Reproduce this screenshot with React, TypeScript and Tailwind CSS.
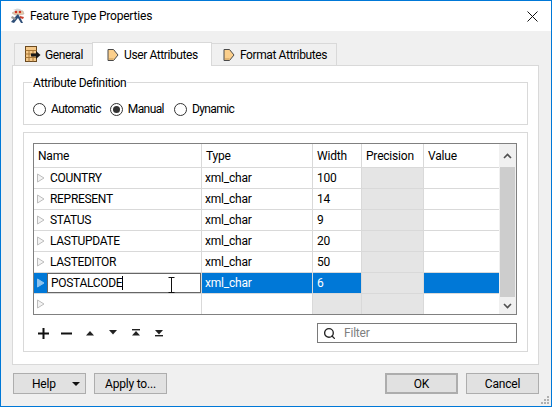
import { Search } from 'lucide-react';

const rows = [
  { name: 'COUNTRY', width: '100' },
  { name: 'REPRESENT', width: '14' },
  { name: 'STATUS', width: '9' },
  { name: 'LASTUPDATE', width: '20' },
  { name: 'LASTEDITOR', width: '50' },
];

const gridCols = 'grid grid-cols-[168px_111px_49px_62px_75px]';

function AppIcon() {
  return (
    <svg width="18" height="18" viewBox="0 0 18 18" className="flex-shrink-0">
      <path d="M3 6 L8 3 L14 4 L15 7 L11 8 L6 8 Z" fill="#e8c8a8" stroke="#b8b0a8" strokeWidth="0.6" />
      <path d="M4 3 L8 1.5 L11 2 L13 3.5 L9 4 Z" fill="#d8d8d8" />
      <circle cx="7" cy="5" r="1.2" fill="#d03020" />
      <circle cx="11" cy="5" r="1.2" fill="#d03020" />
      <path d="M9 7 L12 12 L14 16 L12 16 L9 11 L5 16 L2 15 L7 9 Z" fill="#2f4f78" />
      <path d="M3 9 L7 11 L6 13 L2 11 Z" fill="#9a9a9a" />
      <path d="M11 9 L15 10 L14 12 L11 11 Z" fill="#c84030" />
    </svg>
  );
}

function TableIcon() {
  return (
    <svg width="16" height="17" viewBox="0 0 16 17" className="flex-shrink-0">
      <rect x="0.5" y="0.5" width="11" height="15" fill="#f5c98a" stroke="#6b4a20" />
      <path d="M0.5 4.5H11.5M0.5 8H11.5M0.5 11.5H11.5M4 4.5V15.5M8 4.5V15.5" stroke="#a87838" strokeWidth="1" fill="none" />
      <path d="M6 7.5H11V5L15.5 9L11 13V10.5H6Z" fill="#1a1a1a" />
    </svg>
  );
}

function TagIcon() {
  return (
    <svg width="12" height="14" viewBox="0 0 12 14" className="flex-shrink-0">
      <path d="M1 1.5H6.5L11 7L6.5 12.5H1Z" fill="#fbcf8c" stroke="#4a4a4a" strokeWidth="1" />
      <path d="M2 10.5V11.5H6L6.8 10.5Z" fill="#c89a58" />
    </svg>
  );
}

function Radio({ label, checked, className = '' }: { label: string; checked?: boolean; className?: string }) {
  return (
    <div className={`flex items-center gap-[5px] ${className}`}>
      <span className="w-[13px] h-[13px] rounded-full border border-[#333333] bg-white flex items-center justify-center">
        {checked && <span className="w-[7px] h-[7px] rounded-full bg-[#333333]" />}
      </span>
      <span className="tracking-[-0.6px]">{label}</span>
    </div>
  );
}

function RowArrow({ fill = '#f4f4f4', stroke = '#bcbcbc' }: { fill?: string; stroke?: string }) {
  return (
    <svg width="8" height="10" viewBox="0 0 8 10" className="flex-shrink-0">
      <path d="M0.5 1 L7 5 L0.5 9 Z" fill={fill} stroke={stroke} strokeWidth="1" />
    </svg>
  );
}

function TriIcon({ down, bar }: { down?: boolean; bar?: boolean }) {
  return (
    <svg width="10" height="8" viewBox="0 0 10 8">
      {bar && <rect x="1" y={down ? 6 : 0} width="8" height="1.4" fill="#222222" />}
      <path d={down ? 'M1 1 H9 L5 5.5 Z' : 'M1 6.5 H9 L5 2 Z'} fill="#222222" />
    </svg>
  );
}

function Button({ label, className = '' }: { label: string; className?: string }) {
  return (
    <button className={`w-[73px] h-[21px] bg-[#e1e1e1] border border-[#adadad] text-center text-black ${className}`}>
      {label}
    </button>
  );
}

export default function App() {
  return (
    <div
      className="w-[552px] h-[407px] border border-[#0078d7] flex flex-col bg-[#f0f0f0] text-[12px] tracking-[-0.2px] leading-none text-black overflow-hidden"
      style={{ fontFamily: 'Roboto, sans-serif' }}
    >
      {/* title bar */}
      <div className="h-[30px] bg-white flex items-center pl-[8px] pr-[10px] flex-shrink-0">
        <AppIcon />
        <span className="ml-[3px]">Feature Type Properties</span>
        <svg width="11" height="11" viewBox="0 0 11 11" className="ml-auto mr-[3px]">
          <path d="M0.5 0.5L10.5 10.5M10.5 0.5L0.5 10.5" stroke="#111111" strokeWidth="1" />
        </svg>
      </div>

      <div className="flex-1 flex flex-col px-[11px] pt-[11px]">
        {/* tabs */}
        <div className="h-[24px] flex items-end pl-[2px] -mb-px relative z-10 tracking-[-0.4px]">
          <div className="w-[78px] h-[22px] mb-px bg-[#f0f0f0] border border-[#d9d9d9] border-r-0 border-b-0 flex items-center pl-[10px] gap-[4px]">
            <TableIcon />
            <span>General</span>
          </div>
          <div className="w-[120px] h-[24px] bg-white border border-[#d9d9d9] border-b-0 flex items-center pl-[14px] gap-[5px]">
            <TagIcon />
            <span>User Attributes</span>
          </div>
          <div className="w-[125px] h-[22px] mb-px bg-[#f0f0f0] border border-[#d9d9d9] border-l-0 border-b-0 flex items-center pl-[11px] gap-[5px]">
            <TagIcon />
            <span>Format Attributes</span>
          </div>
        </div>

        {/* pane */}
        <div className="w-[527px] h-[300px] bg-white border border-[#d9d9d9] px-[10px] pt-[16px] flex flex-col gap-[7px]">
          <div className="relative h-[43px] border border-[#d9d9d9] flex items-center pl-[9px] pt-[11px]">
            <span className="absolute left-[8px] -top-[6px] bg-white px-px tracking-[-0.35px]">Attribute Definition</span>
            <Radio label="Automatic" />
            <Radio label="Manual" checked className="ml-[9px]" />
            <Radio label="Dynamic" className="ml-[10px]" />
          </div>

          <div className="h-[220px] border border-[#d9d9d9] px-[9px] pt-[10px] flex flex-col">
            {/* table */}
            <div className="w-[484px] h-[172px] border border-[#808080] flex flex-shrink-0">
              <div className="w-[465px] flex-shrink-0">
                <div className={`${gridCols} h-[24px] border-b border-[#d9d9d9]`}>
                  {['Name', 'Type', 'Width', 'Precision', 'Value'].map((h, i) => (
                    <div key={h} className={`flex items-center pl-[4px] ${i < 4 ? 'border-r border-[#d9d9d9]' : ''}`}>
                      {h}
                    </div>
                  ))}
                </div>
                {rows.map((r) => (
                  <div key={r.name} className={`${gridCols} h-[21px] border-b border-[#d9d9d9]`}>
                    <div className="flex items-center pl-[3px] gap-[5px] border-r border-[#d9d9d9]">
                      <RowArrow />
                      <span className="tracking-[-0.3px]">{r.name}</span>
                    </div>
                    <div className="flex items-center pl-[3px] border-r border-[#d9d9d9]">xml_char</div>
                    <div className="flex items-center pl-[4px] border-r border-[#d9d9d9]">{r.width}</div>
                    <div className="bg-[#e5e5e5] border-r border-[#d9d9d9]" />
                    <div />
                  </div>
                ))}
                {/* row being edited */}
                <div className={`${gridCols} h-[21px] border-b border-[#d9d9d9]`}>
                  <div className="flex bg-[#0078d7] border-r border-[#d9d9d9]">
                    <div className="w-[13px] flex items-center pl-[3px] flex-shrink-0">
                      <RowArrow fill="#8fc4ee" stroke="#8fc4ee" />
                    </div>
                    <div className="relative flex-1 bg-white border border-[#666666] flex items-center pl-[3px]">
                      <span className="tracking-[-0.3px]">POSTALCODE</span>
                      <span className="w-px h-[14px] bg-black" />
                      <svg width="7" height="16" viewBox="0 0 7 16" className="absolute left-[120px] top-[3px]">
                        <path d="M0.5 0.5H6.5M0.5 15.5H6.5M3.5 0.5V15.5" stroke="#111111" strokeWidth="1" fill="none" />
                      </svg>
                    </div>
                  </div>
                  <div className="flex items-center pl-[3px] bg-[#0078d7] text-white border-r border-[#d9d9d9]">xml_char</div>
                  <div className="flex items-center pl-[4px] bg-[#0078d7] text-white border-r border-[#d9d9d9]">6</div>
                  <div className="bg-[#e5e5e5] border-r border-[#d9d9d9]" />
                  <div className="bg-[#0078d7]" />
                </div>
                {/* empty row */}
                <div className={`${gridCols} h-[20px]`}>
                  <div className="flex items-center pl-[3px] border-r border-[#d9d9d9]">
                    <RowArrow />
                  </div>
                  <div className="border-r border-[#d9d9d9]" />
                  <div className="bg-[#e5e5e5] border-r border-[#d9d9d9]" />
                  <div className="bg-[#e5e5e5] border-r border-[#d9d9d9]" />
                  <div />
                </div>
              </div>

              {/* scrollbar */}
              <div className="flex-1 bg-[#f0f0f0] flex flex-col items-center">
                <div className="h-[23px] flex items-center justify-center flex-shrink-0">
                  <svg width="9" height="6" viewBox="0 0 9 6">
                    <path d="M1 5L4.5 1.5L8 5" stroke="#505050" strokeWidth="1.6" fill="none" />
                  </svg>
                </div>
                <div className="w-[15px] h-[130px] bg-[#cdcdcd] flex-shrink-0" />
                <div className="flex-1 flex items-center justify-center">
                  <svg width="9" height="6" viewBox="0 0 9 6">
                    <path d="M1 1L4.5 4.5L8 1" stroke="#505050" strokeWidth="1.6" fill="none" />
                  </svg>
                </div>
              </div>
            </div>

            {/* toolbar */}
            <div className="flex items-center mt-[8px] h-[20px] pr-px">
              <svg width="11" height="11" viewBox="0 0 11 11" className="ml-[5px]">
                <path d="M0 5.5H11M5.5 0V11" stroke="#111111" strokeWidth="2" />
              </svg>
              <svg width="11" height="11" viewBox="0 0 11 11" className="ml-[12px]">
                <path d="M0 5.5H11" stroke="#111111" strokeWidth="2" />
              </svg>
              <span className="ml-[13px] flex"><TriIcon /></span>
              <span className="ml-[13px] flex"><TriIcon down /></span>
              <span className="ml-[13px] flex"><TriIcon bar /></span>
              <span className="ml-[13px] flex"><TriIcon down bar /></span>
              <div className="ml-auto w-[200px] h-[20px] bg-white border border-[#7a7a7a] flex items-center pl-[5px] gap-[8px] text-[#808080]">
                <Search className="w-[13px] h-[13px] text-[#222222]" strokeWidth={2.5} />
                <span>Filter</span>
              </div>
            </div>
          </div>
        </div>

        {/* dialog buttons */}
        <div className="flex mt-[8px] pl-px pr-px">
          <button className="w-[73px] h-[21px] bg-[#e1e1e1] border border-[#adadad] flex items-center pl-[18px]">
            <span>Help</span>
            <svg width="8" height="4" viewBox="0 0 8 4" className="ml-auto mr-[5px]">
              <path d="M0 0H8L4 4Z" fill="#111111" />
            </svg>
          </button>
          <Button label="Apply to..." className="ml-[8px]" />
          <Button label="OK" className="ml-auto border-2 border-[#0078d7]" />
          <Button label="Cancel" className="ml-[8px]" />
        </div>
      </div>

      {/* size grip */}
      <div className="absolute left-[541px] top-[396px] grid grid-cols-3 gap-px w-[8px] h-[8px]">
        {[0, 0, 1, 0, 1, 1, 1, 1, 1].map((on, i) => (
          <span key={i} className={on ? 'w-[2px] h-[2px] bg-[#b0b0b0]' : 'w-[2px] h-[2px]'} />
        ))}
      </div>
    </div>
  );
}
